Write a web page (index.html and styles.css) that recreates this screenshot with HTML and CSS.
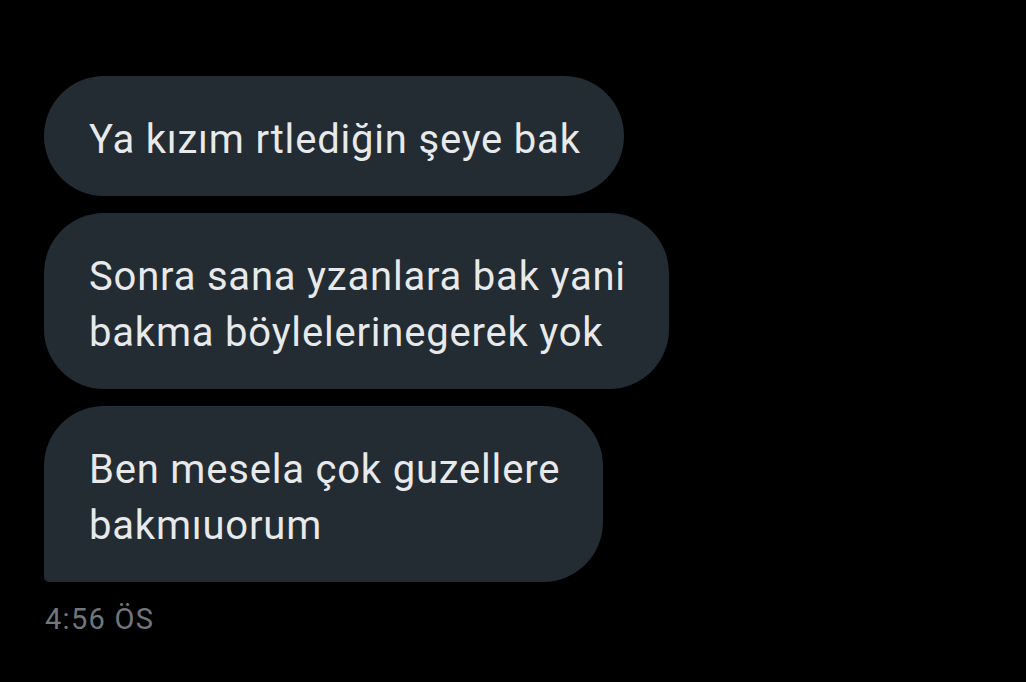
FILE: index.html
```html
<!DOCTYPE html>
<html lang="tr">
<head>
<meta charset="utf-8">
<link rel="stylesheet" href="styles.css">
</head>
<body>
<main class="chat">
  <div class="bubble first">Ya kızım rtlediğin şeye bak</div>
  <div class="bubble middle">Sonra sana yzanlara bak yani<br>bakma böylelerinegerek yok</div>
  <div class="bubble last">Ben mesela çok guzellere<br>bakmıuorum</div>
  <div class="time">4:56 ÖS</div>
</main>
</body>
</html>
```

FILE: styles.css
```css
html, body {
  margin: 0;
  padding: 0;
  background: #000;
  height: 100%;
}
body {
  font-family: Roboto, "Liberation Sans", sans-serif;
  overflow: hidden;
}
.chat {
  display: flex;
  flex-direction: column;
  align-items: flex-start;
  gap: 17px;
  padding: 76px 0 0 44px;
}
.bubble {
  background: #232b33;
  color: #e7e9ea;
  font-size: 40px;
  line-height: 56px;
  letter-spacing: 0.8px;
  padding: 36px 43px 28px 45px;
  border-radius: 60px;
  white-space: nowrap;
}
.last {
  border-bottom-left-radius: 5px;
}
.time {
  margin-top: 0;
  margin-left: 1px;
  color: #71767b;
  font-size: 29px;
  line-height: 40px;
  letter-spacing: 1.3px;
}
```
